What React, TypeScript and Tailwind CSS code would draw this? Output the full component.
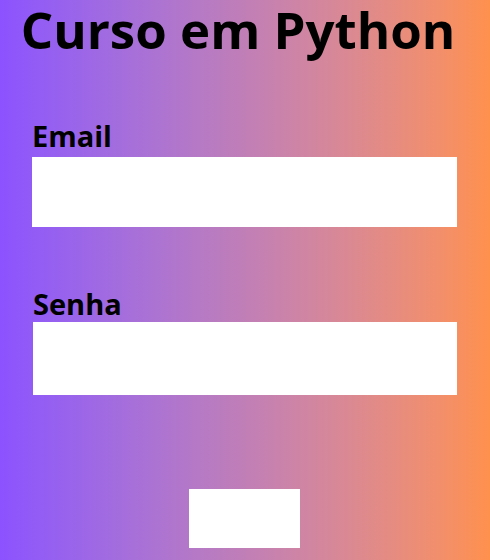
export default function App() {
  return (
    <div
      className="w-[490px] h-[560px] overflow-hidden bg-gradient-to-r from-[#8c52ff] to-[#ff914d] flex flex-col"
      style={{ fontFamily: '"Open Sans", "Noto Sans", sans-serif' }}
    >
      <h1 className="text-center text-[51px] leading-[58px] font-bold text-black pr-[14px] whitespace-nowrap">
        Curso em Python
      </h1>

      <form className="flex flex-col px-[32px] w-[457px]">
        <label className="mt-[63px] text-[29px] leading-[29px] font-bold text-black">
          Email
        </label>
        <input type="email" className="mt-[7px] h-[70px] w-[425px] bg-white border-0 outline-none" />

        <label className="mt-[62px] ml-[1px] text-[29px] leading-[29px] font-bold text-black">
          Senha
        </label>
        <input type="password" className="mt-[4px] ml-[1px] h-[73px] w-[424px] bg-white border-0 outline-none" />

        <div className="flex mt-[94px] pl-[157px]">
          <button type="submit" className="w-[111px] h-[59px] bg-white" />
        </div>
      </form>
    </div>
  );
}
